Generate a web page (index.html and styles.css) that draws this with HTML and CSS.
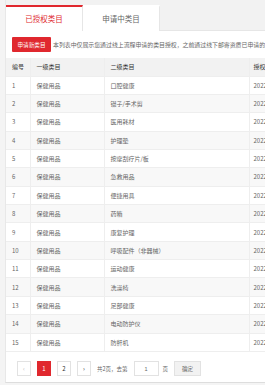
FILE: index.html
```html
<!DOCTYPE html>
<html>
  <head>
    <meta name="viewport" content="width=device-width, initial-scale=1" />
    <link rel="stylesheet" href="styles.css">
  </head>
  <body>
    <div class="card">
      <div class="tabs">
        <div class="tab active">已授权类目</div>
        <div class="tab">申请中类目</div>
      </div>

      <div class="toolbar">
        <button class="btn-red">申请新类目</button>
        <span class="tip">本列表中仅展示您通过线上流程申请的类目授权，之前通过线下邮寄资质已申请的类目授权不在此列表中展示</span>
      </div>

      <table class="list">
        <thead>
          <tr>
            <th class="no">编号</th>
            <th class="cat1">一级类目</th>
            <th class="cat2">二级类目</th>
            <th class="date">授权时间</th>
          </tr>
        </thead>
        <tbody>
          <tr><td>1</td><td>保健用品</td><td>口腔健康</td><td class="time">2022-03-15</td></tr>
          <tr><td>2</td><td>保健用品</td><td>镊子/手术剪</td><td class="time">2022-03-15</td></tr>
          <tr><td>3</td><td>保健用品</td><td>医用耗材</td><td class="time">2022-03-15</td></tr>
          <tr><td>4</td><td>保健用品</td><td>护理垫</td><td class="time">2022-03-15</td></tr>
          <tr><td>5</td><td>保健用品</td><td>按摩刮疗片/板</td><td class="time">2022-03-15</td></tr>
          <tr><td>6</td><td>保健用品</td><td>急救用品</td><td class="time">2022-03-15</td></tr>
          <tr><td>7</td><td>保健用品</td><td>便捷用具</td><td class="time">2022-03-15</td></tr>
          <tr><td>8</td><td>保健用品</td><td>药箱</td><td class="time">2022-03-15</td></tr>
          <tr><td>9</td><td>保健用品</td><td>康复护理</td><td class="time">2022-03-15</td></tr>
          <tr><td>10</td><td>保健用品</td><td>呼吸配件（非器械）</td><td class="time">2022-03-15</td></tr>
          <tr><td>11</td><td>保健用品</td><td>运动健康</td><td class="time">2022-03-15</td></tr>
          <tr><td>12</td><td>保健用品</td><td>洗澡椅</td><td class="time">2022-03-15</td></tr>
          <tr><td>13</td><td>保健用品</td><td>足部健康</td><td class="time">2022-03-15</td></tr>
          <tr><td>14</td><td>保健用品</td><td>电动防护仪</td><td class="time">2022-03-15</td></tr>
          <tr><td>15</td><td>保健用品</td><td>防鼾机</td><td class="time">2022-03-15</td></tr>
        </tbody>
      </table>

      <div class="pager">
        <span class="pg disabled">&lsaquo;</span>
        <span class="pg current">1</span>
        <span class="pg">2</span>
        <span class="pg">&rsaquo;</span>
        <span class="skip">共2页，去第</span>
        <input class="pg-input" type="text" value="1" />
        <span class="skip">页</span>
        <button class="pg-ok">确定</button>
      </div>
    </div>
  </body>
</html>
```

FILE: styles.css
```css
html,
body {
  overflow: hidden;
}

body {
  margin: 0;
  background: #f4f4f4;
  font-family: "Noto Sans CJK SC", "Noto Sans", sans-serif;
  color: #666;
}

* {
  box-sizing: border-box;
}

.card {
  width: 430px;
  margin-left: 5px;
  background: #fff;
  border-left: 1px solid #e8e8e8;
  border-bottom: 1px solid #ddd;
}

.tabs {
  display: flex;
  height: 31px;
  padding-top: 5px;
  background: #f2f2f2;
  border-bottom: 1px solid #e6e6e6;
}

.tab {
  width: 77px;
  height: 26px;
  line-height: 24px;
  text-align: center;
  font-size: 7.5px;
  color: #666;
  background: #fff;
  border-right: 1px solid #e6e6e6;
  border-top: 2px solid transparent;
}

.tab.active {
  color: #e0282e;
  border-top-color: #e0282e;
}

.toolbar {
  display: flex;
  align-items: center;
  padding: 6px;
  height: 27px;
  white-space: nowrap;
}

.btn-red {
  height: 15px;
  width: 39px;
  padding: 0;
  border: 0;
  border-radius: 1px;
  background: #e0282e;
  color: #fff;
  font-family: inherit;
  font-size: 5.6px;
  flex-shrink: 0;
}

.tip {
  margin-left: 2px;
  font-size: 5.9px;
  color: #666;
}

.list {
  border-collapse: collapse;
  width: 430px;
  table-layout: fixed;
}

.list th,
.list td {
  text-align: left;
  padding: 0 6px;
  font-size: 6px;
  font-weight: normal;
  white-space: nowrap;
  border-bottom: 1px solid #eee;
  border-right: 1px solid #eee;
}

.list th {
  height: 18px;
  background: #f2f2f2;
  color: #333;
}

.list td {
  height: 18.36px;
  color: #666;
}

.list .date,
.list .time {
  padding-left: 4px;
}

.list tbody tr:nth-child(even) {
  background: #f8f8f8;
}

.no {
  width: 24px;
}
.cat1 {
  width: 74px;
}
.cat2 {
  width: 145px;
}
.date {
  width: 187px;
}

.pager {
  display: flex;
  align-items: center;
  padding: 9px 12px 5px 11px;
  height: 30px;
}

.pg {
  width: 14px;
  height: 15px;
  line-height: 14px;
  margin-right: 6px;
  text-align: center;
  font-size: 6px;
  color: #333;
  border: 1px solid #e2e2e2;
  background: #fff;
}

.pg.disabled {
  color: #bbb;
}

.pg.current {
  background: #e0282e;
  border-color: #e0282e;
  color: #fff;
}

.skip {
  font-size: 5.5px;
  color: #666;
  margin-right: 6px;
}

.pg-input {
  width: 25px;
  height: 15px;
  padding: 0;
  margin-right: 4px;
  text-align: center;
  font-size: 5.5px;
  border: 1px solid #e2e2e2;
  color: #666;
}

.pg-ok {
  width: 27px;
  height: 15px;
  padding: 0;
  font-family: inherit;
  font-size: 5.5px;
  color: #666;
  background: #f2f2f2;
  border: 1px solid #e2e2e2;
}
```
